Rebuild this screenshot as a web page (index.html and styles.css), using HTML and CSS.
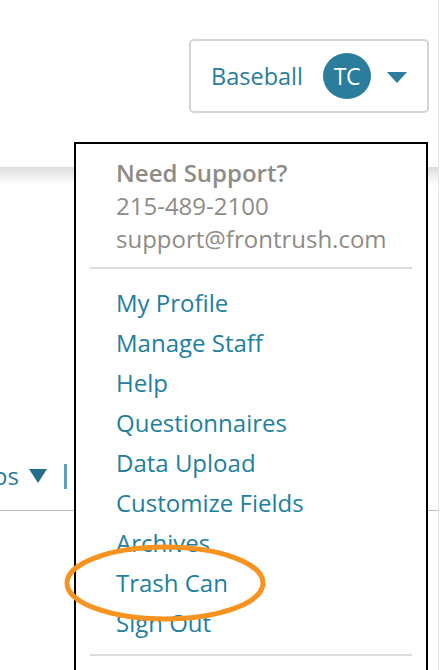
FILE: index.html
```html
<!DOCTYPE html>
<html lang="en">
<head>
<meta charset="utf-8">
<title>Account menu</title>
<link rel="stylesheet" href="styles.css">
</head>
<body>
<div class="page">
  <header class="header">
    <button class="team-btn" type="button">
      <span class="team-name">Baseball</span>
      <span class="avatar">TC</span>
      <svg class="caret" width="20" height="11" viewBox="0 0 20 11"><path d="M0 0H20L10 11Z" fill="#2a7d9b"/></svg>
    </button>
  </header>
  <div class="header-shadow"></div>
  <div class="content">
    <nav class="crumbs">
      <div class="crumb-clip">
        <span class="crumb-text">Groups</span>
        <svg class="crumb-caret" width="18" height="14" viewBox="0 0 18 14"><path d="M0 0H18L9 14Z" fill="#236f8c"/></svg>
        <span class="crumb-bar"></span>
      </div>
    </nav>
    <div class="crumb-rule"></div>
  </div>

  <div class="dropdown">
    <div class="support">
      <div class="support-title">Need Support?</div>
      <div class="support-line">215-489-2100</div>
      <div class="support-line">support@frontrush.com</div>
    </div>
    <div class="divider"></div>
    <ul class="menu">
      <li><a href="#">My Profile</a></li>
      <li><a href="#">Manage Staff</a></li>
      <li><a href="#">Help</a></li>
      <li><a href="#">Questionnaires</a></li>
      <li><a href="#">Data Upload</a></li>
      <li><a href="#">Customize Fields</a></li>
      <li><a href="#">Archives</a></li>
      <li><a href="#">Trash Can</a></li>
      <li><a href="#">Sign Out</a></li>
    </ul>
    <div class="divider divider-bottom"></div>
  </div>

  <svg class="highlight" width="210" height="84" viewBox="0 0 210 84">
    <ellipse cx="102" cy="41" rx="98" ry="36" fill="none" stroke="#f7931e" stroke-width="5"/>
  </svg>
</div>
</body>
</html>
```

FILE: styles.css
```css
* { box-sizing: border-box; }
html, body { margin: 0; padding: 0; background: #fff; }
body {
  font-family: "Open Sans", "DejaVu Sans", sans-serif;
  width: 442px;
  height: 670px;
  overflow: hidden;
}
.page {
  position: relative;
  width: 439px;
  height: 670px;
  border-right: 1px solid #e6e6e6;
}
.header {
  height: 167px;
  display: flex;
  justify-content: flex-end;
  align-items: flex-start;
  padding: 39px 9px 0 0;
}
.team-btn {
  display: flex;
  align-items: center;
  width: 240px;
  height: 74px;
  padding: 0 0 0 20px;
  border: 2px solid #d5d5d5;
  border-radius: 5px;
  background: #fff;
  font-family: inherit;
  cursor: pointer;
}
.team-name {
  font-size: 23.5px;
  color: #2a7d9b;
}
.avatar {
  width: 48px;
  height: 46px;
  margin-left: 20px;
  border-radius: 50%;
  background: #2c7d9b;
  color: #fff;
  font-size: 23px;
  display: flex;
  align-items: center;
  justify-content: center;
  letter-spacing: -0.5px;
}
.caret { margin-left: 16px; margin-top: 2px; }
.header-shadow {
  height: 18px;
  background: linear-gradient(#dbdbdb 0%, #e6e6e6 25%, #fff 100%);
}
.content {
  padding-top: 278px;
}
.crumbs {
  height: 26px;
}
.crumb-clip {
  width: 75px;
  overflow: hidden;
  display: flex;
  justify-content: flex-end;
  align-items: center;
  padding-right: 8px;
  white-space: nowrap;
}
.crumb-text {
  font-size: 24px;
  color: #2a7d9b;
  line-height: 26px;
}
.crumb-caret { margin-left: 10px; flex: none; }
.crumb-bar {
  flex: none;
  width: 3px;
  height: 25px;
  margin-left: 17px;
  background: #5f9fbb;
}
.crumb-rule {
  margin-top: 21px;
  height: 1px;
  background: #b9bcbf;
}
.dropdown {
  position: absolute;
  left: 74px;
  top: 142px;
  width: 354px;
  height: 560px;
  background: #fff;
  border: 2px solid #000;
  padding-top: 12px;
}
.support {
  padding-left: 40px;
  color: #8f8b86;
  font-size: 24px;
  line-height: 33px;
}
.support-title { font-weight: 600; }
.divider {
  height: 2px;
  margin: 12px 14px 0 14px;
  background: #dcdcdc;
}
.menu {
  list-style: none;
  margin: 14px 0 0 0;
  padding: 0 0 0 40px;
}
.menu li {
  height: 40px;
  line-height: 40px;
}
.menu a {
  font-size: 24px;
  color: #22809e;
  text-decoration: none;
}
.divider-bottom { margin-top: 11px; }
.highlight {
  position: absolute;
  left: 63px;
  top: 542px;
}
```
